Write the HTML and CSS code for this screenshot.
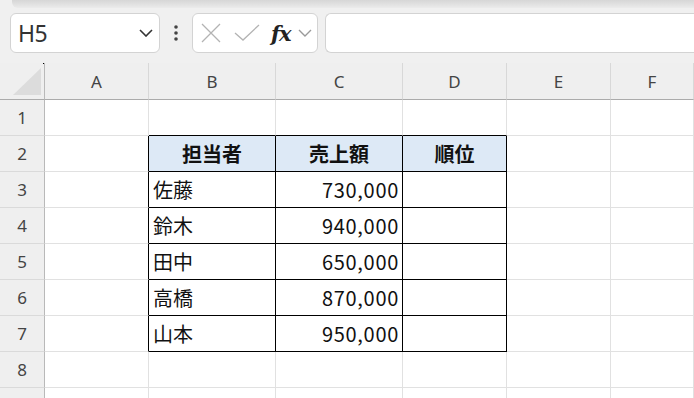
FILE: index.html
```html
<!DOCTYPE html>
<html lang="ja">
<head>
  <meta charset="UTF-8">
  <meta name="viewport" content="width=device-width, initial-scale=1.0">
  <title>売上順位</title>
  <link rel="stylesheet" href="styles.css">
</head>
<body>
  <div class="toolbar">
    <div class="ribbon-edge"></div>
    <div class="formula-row">
      <div class="name-box">
        <span class="cell-ref">H5</span>
        <svg class="chevron" width="14" height="8" viewBox="0 0 14 8"><path d="M1 1 L7 7 L13 1" fill="none" stroke="#333" stroke-width="1.6"/></svg>
      </div>
      <div class="more">
        <svg width="4" height="16" viewBox="0 0 4 16"><circle cx="2" cy="2" r="1.8" fill="#444"/><circle cx="2" cy="8" r="1.8" fill="#444"/><circle cx="2" cy="14" r="1.8" fill="#444"/></svg>
      </div>
      <div class="fx-box">
        <svg class="icon-cancel" width="20" height="20" viewBox="0 0 20 20"><path d="M1 1 L19 19 M19 1 L1 19" stroke="#b3b3b3" stroke-width="1.3" fill="none"/></svg>
        <svg class="icon-enter" width="26" height="18" viewBox="0 0 26 18"><path d="M1 9 L9 16 L25 1" stroke="#b3b3b3" stroke-width="1.3" fill="none"/></svg>
        <span class="fx">fx</span>
        <svg class="chevron small" width="14" height="8" viewBox="0 0 14 8"><path d="M1 1 L7 7 L13 1" fill="none" stroke="#9a9a9a" stroke-width="1.4"/></svg>
      </div>
      <div class="formula-input"></div>
    </div>
  </div>

  <div class="sheet">
    <!-- column headers -->
    <div class="corner">
      <svg width="45" height="37" viewBox="0 0 45 37"><polygon points="13,32 41,32 41,5" fill="#dcdcdc"/><rect x="43" y="0" width="1" height="1" fill="#000"/></svg>
    </div>
    <div class="col-head">A</div>
    <div class="col-head">B</div>
    <div class="col-head">C</div>
    <div class="col-head">D</div>
    <div class="col-head">E</div>
    <div class="col-head">F</div>

    <!-- row 1 -->
    <div class="row-head">1</div>
    <div class="c"></div>
    <div class="c edge-b"></div>
    <div class="c edge-b"></div>
    <div class="c edge-b"></div>
    <div class="c"></div>
    <div class="c"></div>

    <!-- row 2 -->
    <div class="row-head">2</div>
    <div class="c edge-r"></div>
    <div class="c tb th">担当者</div>
    <div class="c tb th">売上額</div>
    <div class="c tb th">順位</div>
    <div class="c"></div>
    <div class="c"></div>

    <!-- row 3 -->
    <div class="row-head">3</div>
    <div class="c edge-r"></div>
    <div class="c tb name">佐藤</div>
    <div class="c tb num">730,000</div>
    <div class="c tb"></div>
    <div class="c"></div>
    <div class="c"></div>

    <!-- row 4 -->
    <div class="row-head">4</div>
    <div class="c edge-r"></div>
    <div class="c tb name">鈴木</div>
    <div class="c tb num">940,000</div>
    <div class="c tb"></div>
    <div class="c"></div>
    <div class="c"></div>

    <!-- row 5 -->
    <div class="row-head">5</div>
    <div class="c edge-r"></div>
    <div class="c tb name">田中</div>
    <div class="c tb num">650,000</div>
    <div class="c tb"></div>
    <div class="c"></div>
    <div class="c"></div>

    <!-- row 6 -->
    <div class="row-head">6</div>
    <div class="c edge-r"></div>
    <div class="c tb name">高橋</div>
    <div class="c tb num">870,000</div>
    <div class="c tb"></div>
    <div class="c"></div>
    <div class="c"></div>

    <!-- row 7 -->
    <div class="row-head">7</div>
    <div class="c edge-r"></div>
    <div class="c tb name">山本</div>
    <div class="c tb num">950,000</div>
    <div class="c tb"></div>
    <div class="c"></div>
    <div class="c"></div>

    <!-- row 8 -->
    <div class="row-head">8</div>
    <div class="c"></div>
    <div class="c"></div>
    <div class="c"></div>
    <div class="c"></div>
    <div class="c"></div>
    <div class="c"></div>

    <!-- row 9, label hidden below the fold -->
    <div class="row-head"></div>
    <div class="c"></div>
    <div class="c"></div>
    <div class="c"></div>
    <div class="c"></div>
    <div class="c"></div>
    <div class="c"></div>
  </div>
</body>
</html>
```

FILE: styles.css
```css
html, body {
  margin: 0;
  padding: 0;
  height: 398px;
  overflow: hidden;
}

body {
  font-family: 'Noto Sans', 'Noto Sans CJK JP', sans-serif;
  background-color: #fff;
  color: #222;
}

/* Formula bar area */
.toolbar {
  background-color: #f0f0f0;
  padding-bottom: 10px;
}

.ribbon-edge {
  height: 8px;
  margin-left: 12px;
  background: linear-gradient(#d6d6d6, #ebebeb);
  border-bottom-left-radius: 6px;
}

.formula-row {
  display: flex;
  align-items: stretch;
  height: 40px;
  margin-top: 5px;
  padding-left: 10px;
}

.name-box {
  width: 150px;
  box-sizing: border-box;
  display: flex;
  align-items: center;
  justify-content: space-between;
  padding: 0 6px 0 7px;
  background-color: #fff;
  border: 1px solid #d3d3d3;
  border-radius: 6px;
}

.cell-ref {
  font-family: 'Noto Sans', sans-serif;
  font-size: 23px;
  color: #333;
  letter-spacing: -0.5px;
}

.more {
  width: 32px;
  display: flex;
  align-items: center;
  justify-content: center;
}

.fx-box {
  width: 126px;
  box-sizing: border-box;
  display: flex;
  align-items: center;
  background-color: #fff;
  border: 1px solid #d3d3d3;
  border-radius: 6px;
}

.icon-cancel {
  margin-left: 8px;
}

.icon-enter {
  margin-left: 13px;
}

.fx {
  margin-left: 11px;
  font-family: 'DejaVu Serif', 'Liberation Serif', serif;
  font-style: italic;
  font-weight: bold;
  font-size: 21px;
  color: #222;
  letter-spacing: -1px;
  line-height: 1;
}

.chevron.small {
  margin-left: 7px;
}

.formula-input {
  flex: 1;
  margin-left: 7px;
  margin-right: -10px;
  background-color: #fff;
  border: 1px solid #d3d3d3;
  border-right: none;
  border-radius: 6px 0 0 6px;
}

/* Worksheet grid */
.sheet {
  display: grid;
  grid-template-columns: 45px 104px 127px 127px 104px 104px 1fr;
  grid-template-rows: 37px repeat(9, 36px);
}

.sheet > div {
  box-sizing: border-box;
}

.corner {
  background-color: #efefef;
  border-right: 1px solid #b9b9b9;
  border-bottom: 1px solid #ababab;
}

.corner svg {
  display: block;
}

.col-head {
  background-color: #efefef;
  border-right: 1px solid #d8d8d8;
  border-bottom: 1px solid #ababab;
  display: flex;
  align-items: center;
  justify-content: center;
  font-size: 17px;
  color: #444;
}

.row-head {
  background-color: #efefef;
  border-right: 1px solid #b9b9b9;
  border-bottom: 1px solid #dadada;
  display: flex;
  align-items: center;
  justify-content: center;
  font-size: 17px;
  color: #444;
}

.c {
  border-right: 1px solid #e1e1e1;
  border-bottom: 1px solid #e1e1e1;
  display: flex;
  align-items: center;
  font-family: 'Noto Sans CJK JP', sans-serif;
  font-size: 20px;
  color: #111;
}

/* Black ruled table B2:D7 */
.tb {
  border-right-color: #000;
  border-bottom-color: #000;
}

.edge-r {
  border-right-color: #000;
}

.edge-b {
  border-bottom-color: #000;
}

.th {
  background-color: #dde9f6;
  justify-content: center;
  font-weight: bold;
}

.name {
  padding-left: 4px;
}

.num {
  justify-content: flex-end;
  padding-right: 3px;
  letter-spacing: 0.7px;
}
```
